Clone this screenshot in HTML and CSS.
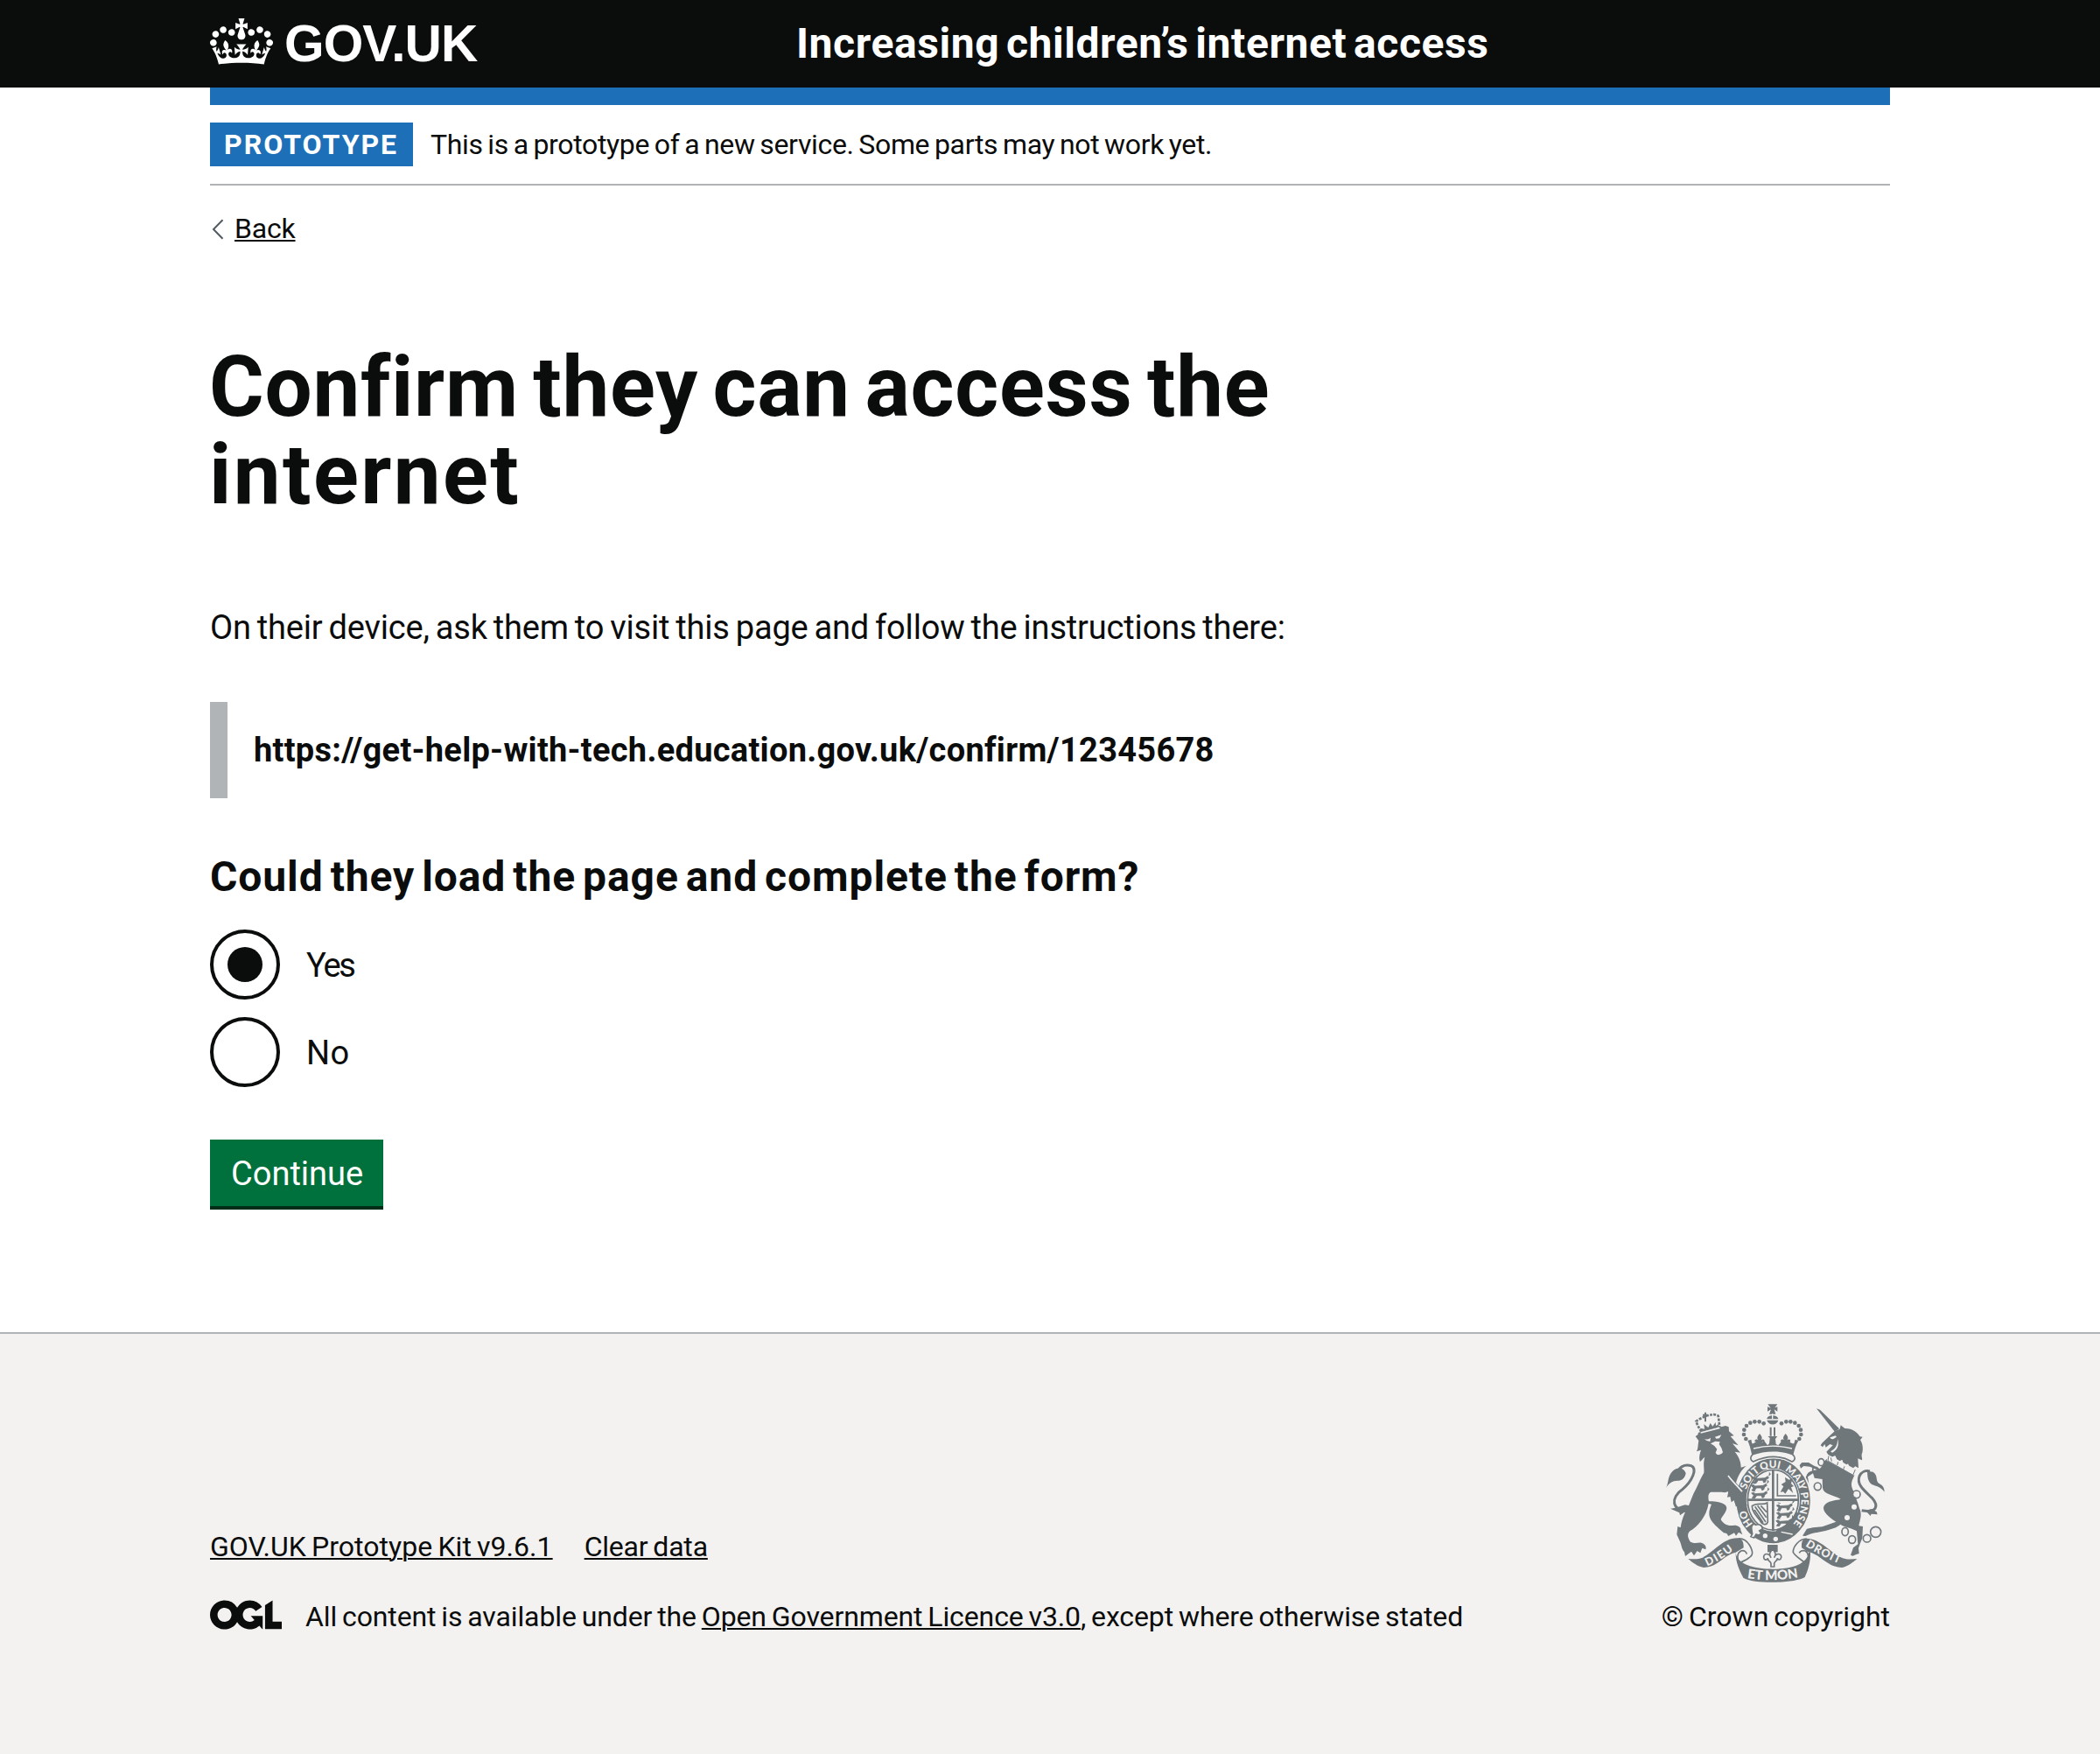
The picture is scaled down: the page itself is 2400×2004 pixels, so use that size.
FILE: index.html
```html
<!DOCTYPE html>
<html lang="en">
<head>
<meta charset="utf-8">
<title>Confirm they can access the internet</title>
<link rel="stylesheet" href="styles.css">
</head>
<body>
<header class="header">
  <div class="container header-row">
    <svg class="logo" viewBox="0 0 340 70" role="img" aria-label="GOV.UK">
      <svg x="0" y="1" width="72" height="53" viewBox="0 0 132 97"><path fill="#fff" fill-rule="evenodd" d="M25 30.2c3.5 1.5 7.7-.2 9.1-3.7 1.5-3.6-.2-7.8-3.9-9.2-3.6-1.4-7.6.3-9.1 3.9-1.4 3.5.3 7.5 3.9 9zM9 39.5c3.6 1.5 7.8-.2 9.2-3.7 1.5-3.6-.2-7.8-3.9-9.1-3.6-1.5-7.6.2-9.1 3.8-1.4 3.5.3 7.5 3.8 9zM4.4 57.2c3.5 1.5 7.7-.2 9.1-3.8 1.5-3.6-.2-7.7-3.9-9.1-3.5-1.5-7.6.3-9.1 3.8-1.4 3.5.3 7.6 3.9 9.1zm38.3-21.4c3.5 1.5 7.7-.2 9.1-3.8 1.5-3.6-.2-7.7-3.9-9.1-3.6-1.5-7.6.3-9.1 3.8-1.3 3.6.4 7.7 3.9 9.1zm64.4-5.6c-3.6 1.5-7.8-.2-9.1-3.7-1.5-3.6.2-7.8 3.8-9.2 3.6-1.4 7.7.3 9.2 3.9 1.3 3.5-.4 7.5-3.9 9zm15.9 9.3c-3.6 1.5-7.7-.2-9.1-3.7-1.5-3.6.2-7.8 3.7-9.1 3.6-1.5 7.7.2 9.2 3.8 1.5 3.5-.3 7.5-3.8 9zm4.7 17.7c-3.6 1.5-7.8-.2-9.2-3.8-1.5-3.6.2-7.7 3.9-9.1 3.6-1.5 7.7.3 9.2 3.8 1.3 3.5-.4 7.6-3.9 9.1zM89.3 35.8c-3.6 1.5-7.8-.2-9.2-3.8-1.4-3.6.2-7.7 3.9-9.1 3.6-1.5 7.7.3 9.2 3.8 1.4 3.6-.3 7.7-3.9 9.1zM69.7 17.7l8.9 4.7V9.3l-8.9 2.8c-.2-.3-.5-.6-.9-.9L72.4 0H59.6l3.5 11.2c-.3.3-.6.5-.9.9l-8.8-2.8v13.1l8.8-4.7c.3.3.6.7.9.9l-5 15.4v.1c-.2.8-.4 1.6-.4 2.4 0 4.1 3.1 7.5 7 8.1h.2c.3 0 .7.1 1 .1.4 0 .7 0 1-.1h.2c4-.6 7.1-4.1 7.1-8.1 0-.8-.1-1.7-.4-2.4V34l-5.1-15.4c.4-.2.7-.6 1-.9zM66 92.8c16.9 0 32.8 1.1 47.1 3.2 4-16.9 8.9-26.7 14-33.5l-9.6-3.4c1 4.9 1.1 7.2 0 10.2-1.5-1.4-3-4.3-4.2-8.7L108.6 76c2.8-2 5-3.2 7.5-3.3-4.4 9.4-10 11.9-13.6 11.2-4.3-.8-6.3-4.6-5.6-7.9 1-4.7 5.7-5.9 8-.5 4.3-8.7-3-11.4-7.6-8.8 7.1-7.2 7.9-13.5 2.1-21.1-8 6.1-8.1 12.3-4.5 20.8-4.7-5.4-12.1-2.5-9.5 6.2 3.4-5.2 7.9-2 7.2 3.1-.6 4.3-6.4 7.8-13.5 7.2-10.3-.9-10.9-8-11.2-13.8 2.5-.5 7.1 1.8 11 7.3L80.2 60c-4.1 4.4-8 5.3-12.3 5.4 1.4-4.4 8-11.6 8-11.6H55.5s6.4 7.2 7.9 11.6c-4.2-.1-8-1-12.3-5.4l1.4 16.4c3.9-5.5 8.5-7.7 10.9-7.3-.3 5.8-.9 12.8-11.1 13.8-7.2.6-12.9-2.9-13.5-7.2-.7-5 3.8-8.3 7.1-3.1 2.7-8.7-4.6-11.6-9.4-6.2 3.7-8.5 3.6-14.7-4.6-20.8-5.8 7.6-5 13.9 2.2 21.1-4.7-2.6-11.9.1-7.7 8.8 2.3-5.5 7.1-4.2 8.1.5.7 3.3-1.3 7.1-5.7 7.9-3.5.7-9-1.8-13.5-11.2 2.5.1 4.7 1.3 7.5 3.3l-4.7-15.4c-1.2 4.4-2.7 7.2-4.3 8.7-1.1-3-.9-5.3 0-10.2l-9.5 3.4c5 6.9 9.9 16.7 14 33.5 14.8-2.1 30.8-3.2 47.7-3.2z"/></svg>
      <text class="logo-text" x="85" y="50">GOV.UK</text>
    </svg>
    <span class="service-name">Increasing children’s internet access</span>
  </div>
</header>
<div class="container page">
  <div class="header-bar"></div>
  <div class="phase-banner">
    <strong class="tag">PROTOTYPE</strong>
    <span class="phase-text">This is a prototype of a new service. Some parts may not work yet.</span>
  </div>
  <div class="back">
    <svg class="chevron" viewBox="0 0 16 24"><path d="M14.5 1.2 4 12l10.5 10.8" fill="none" stroke="#505a5f" stroke-width="2"/></svg>
    <a class="link back-link" href="#">Back</a>
  </div>
  <main class="main">
    <h1 class="title">Confirm they can access the <span class="title-end">internet</span></h1>
    <p class="lead">On their device, ask them to visit this page and follow the instructions there:</p>
    <div class="inset">https://get-help-with-tech.education.gov.uk/confirm/12345678</div>
    <h2 class="question">Could they load the page and complete the form?</h2>
    <div class="radios">
      <label class="radio"><span class="dot dot-on"></span><span class="yes">Yes</span></label>
      <label class="radio"><span class="dot"></span><span class="no">No</span></label>
    </div>
    <button class="button" type="button">Continue</button>
  </main>
</div>
<footer class="footer">
  <div class="container footer-row">
    <div class="footer-main">
      <div class="footer-links"><a class="link kit" href="#">GOV.UK Prototype Kit v9.6.1</a><a class="link clear" href="#">Clear data</a></div>
      <div class="licence">
        <svg class="ogl" viewBox="0 0 483.2 195.7"><path fill="#0b0c0c" d="M421.5 142.8V.1l-50.7 32.3v161.1h112.4v-50.7zm-122.3-9.6A47.12 47.12 0 0 1 221 97.8c0-26 21.1-47.1 47.1-47.1 16.7 0 31.4 8.7 39.7 21.8l42.7-27.2A97.63 97.63 0 0 0 268.1 0c-36.5 0-68.3 20.1-85.1 49.7A98 98 0 0 0 97.8 0C43.9 0 0 43.9 0 97.8s43.9 97.8 97.8 97.8c36.5 0 68.3-20.1 85.1-49.7a97.76 97.76 0 0 0 149.6 25.4l19.4 22.2h3v-87.8h-80l24.3 27.5zM97.8 145c-26 0-47.1-21.1-47.1-47.1s21.1-47.1 47.1-47.1 47.1 21.1 47.1 47.1S123.8 145 97.8 145"/></svg>
        <span class="licence-text">All content is available under the <a class="link ogl-link" href="#">Open Government Licence v3.0</a>, except where otherwise stated</span>
      </div>
    </div>
    <div class="copyright">
      <svg class="crest" viewBox="42 42 750 612" role="img" aria-label="Royal coat of arms">
        <defs>
          <path id="garter" d="M409 487A97 113 0 0 1 409 261A97 113 0 0 1 409 487"/>
          <path id="bandL" d="M183 598Q230 580 290 530"/>
          <path id="bandR" d="M519 529Q580 568 656 598"/>
          <path id="bandC" d="M320 639Q410 654 506 634"/>
          <g id="leopard" class="leopard"><path d="M0 3l8-3 5 5 28-2 10-6 3 6-8 5-3 9-6 2-3-8H18l-7 10-9-1 6-9zM4-6l10 2M54-4l6-6-4-6"/></g>
          <g id="fleur"><path d="M0-20C11-8 9-2 3 5C9-4 19-1 16 9C12 4 8 8 6 18H-6C-8 8-12 4-16 9C-19-1-9-4-3 5C-9-2-11-8 0-20z"/></g>
        </defs>
        <!-- lion -->
        <g class="ink">
          <path d="M143 153L151 148L153 140L246 117L257 121L258 136L275 151L263 153L290 184L270 178L297 209L278 206C293 225 299 241 299 260L318 254C302 266 289 286 282 312C300 338 318 350 316 378L318 392L310 402L306 385L300 400L290 387L282 393L276 372L266 379L262 360L252 362L256 342L244 346L232 344L196 344C188 348 185 356 189 376C215 376 248 380 250 398C250 412 233 428 230 438C240 455 254 462 276 458C290 458 300 466 298 475L304 490L291 482L282 494L276 484L256 495L250 486L240 484L224 470C208 455 191 440 190 420C189 405 195 395 198 386L188 384C180 430 150 463 124 478C112 490 118 504 126 515C140 522 150 517 163 518C174 521 182 530 178 541L166 536L160 553L149 546L138 562L129 548L108 564L105 550C96 540 96 530 91 516L79 490L82 462L92 466C97 430 112 405 120 390L136 350C150 325 162 293 172 278C174 260 168 249 175 224C165 232 162 240 158 239C154 225 158 212 162 200L147 205C153 195 151 181 154 168z"/>
          <path d="M126 410C54 410 61 360 96 337C134 306 150 263 128 254C108 248 92 257 82 271" class="tail"/>
          <path d="M42 329C53 310 45 293 65 272C83 256 104 262 110 280C106 303 91 306 75 306C58 308 51 318 42 329zM57 401C73 401 92 392 108 388L129 392L119 412L105 413L90 424L88 415z"/>
          <path d="M163 137C155 124 149 113 145 102C154 94 170 88 177 84C197 78 213 76 221 83C224 97 224 109 226 121z" class="tiny"/>
          <path d="M164 137L160 125L174 128L172 112L187 123L194 108L202 119L212 105L213 117L222 112L224 121z"/>
          <path d="M168 80h18M177 71v32" class="tiny heavy"/>
        </g>
        <g class="paper"><path d="M164 158C175 166 187 165 195 158L193 171L182 168zM210 155L232 148L225 160L214 161zM195 178L211 170L227 172L224 180L232 193L237 208C230 218 217 220 212 209L217 197L208 186z"/></g>
        <path class="gap" d="M161 141L226 124"/>
        <!-- unicorn -->
        <g class="ink">
          <path d="M558 58L570 62L636 127L621 138z"/>
          <path d="M572 184L577 176L602 152L620 136L638 128L641 115L655 126C680 125 699 140 707 154L716 155L708 166C717 178 718 198 715 209C709 220 718 231 713 235L700 229L702 262L691 256L684 262L598 216L592 206L605 193L614 184L604 180L590 191L586 180L579 190z"/>
          <path d="M586 237L597 229L681 278L688 286C683 300 674 312 680 330C690 356 700 380 705 400C716 420 706 443 703 460L717 462L715 502L708 520L702 536L704 555L694 558L682 563L675 560L684 535L700 523L696 478C680 467 655 466 640 455C618 476 560 480 536 488L520 495L510 494L525 470L546 466L578 463L625 446C600 431 577 410 583 393C594 371 627 374 641 368C615 354 582 352 579 330L578 300L551 296L546 280L528 292L533 325L522 318L512 322L517 303L526 283C533 273 547 269 560 268L535 257L514 255L504 263L500 252L508 243L531 243L556 258L569 264C579 257 580 248 586 237z"/>
          <path d="M713 407C766 417 772 391 748 364C720 337 695 318 705 290C711 276 725 269 741 273" class="tail"/>
          <path d="M732 272L752 275C771 288 758 306 774 316C785 321 791 330 791 344C777 325 763 325 748 318C733 307 733 291 732 272zM726 408L743 426L746 419L767 421L764 412L747 402z"/>
          <g class="chain"><ellipse cx="574" cy="242" rx="10" ry="12"/><ellipse cx="554" cy="267" rx="9" ry="8"/><ellipse cx="562" cy="325" rx="12" ry="13"/><circle cx="695" cy="352" r="13"/><ellipse cx="656" cy="480" rx="11" ry="14"/><ellipse cx="680" cy="507" rx="12" ry="13"/><circle cx="731" cy="503" r="13"/><circle cx="761" cy="481" r="18"/></g>
        </g>
        <path class="gap" d="M593 221L687 274"/>
        <path class="paper" d="M599 215L607 226L622 219L632 241L646 233L654 256L666 247L675 268L692 262L686 287L593 236z"/>
        <path class="collar" d="M600 220L597 237L683 286L691 267M607 226L610 239M632 241L629 252M654 256L650 267"/>
        <path class="paper" d="M604 157L623 151L627 155L615 163L608 162zM606 205C624 196 631 181 630 162C637 183 629 201 612 209z"/>
        <g class="paper"><circle cx="687" cy="395" r="9"/><circle cx="663" cy="432" r="9"/><circle cx="695" cy="352" r="10"/></g>
        <!-- garter and shield -->
        <ellipse class="ink rim" cx="410" cy="374" rx="129" ry="148"/>
        <ellipse class="paper" cx="409" cy="371" rx="92" ry="108"/>
        <ellipse class="outline" cx="409" cy="371" rx="87" ry="103"/>
        <g class="ink shield">
          <path d="M405 267h8v211h-8zM320 367h176v8H320z"/>
          <use href="#leopard" x="340" y="293"/><use href="#leopard" x="334" y="319"/><use href="#leopard" x="335" y="345"/>
          <use href="#leopard" x="421" y="387"/><use href="#leopard" x="421" y="413"/><use href="#leopard" x="419" y="440"/>
          <path d="M424 281V357H488" class="line"/>
          <path d="M434 344L445 325L437 318L452 309L450 293L464 302L476 296L471 315L480 324L471 328L478 348L462 333L451 350L444 343z"/>
          <path d="M421 471C450 463 475 440 487 410L497 420C483 454 455 480 421 482z"/>
        </g>
        <path class="harp" d="M337 392C354 378 374 391 389 381L391 446C386 462 369 454 364 441C346 419 337 407 337 392zM347 394L384 447M356 391L386 431M367 391L387 413M345 405L375 449"/>
        <text class="motto"><textPath href="#garter" startOffset="78">HO</textPath></text>
        <text class="motto"><textPath href="#garter" startOffset="203">SOIT</textPath></text>
        <text class="motto"><textPath href="#garter" startOffset="288">QUI</textPath></text>
        <text class="motto"><textPath href="#garter" startOffset="371">MAL</textPath></text>
        <text class="motto"><textPath href="#garter" startOffset="437">Y</textPath></text>
        <text class="motto pense"><textPath href="#garter" startOffset="466">PENSE</textPath></text>
        <path class="buckle" d="M336 475C331 460 341 450 350 457C358 453 372 456 373 470L362 477L369 486L360 492L351 489L344 501L333 497L338 488z"/>
        <g class="paper"><circle cx="382" cy="494" r="8"/><circle cx="418" cy="505" r="8"/></g>
        <path class="gap thin" d="M437 481L476 489"/>
        <!-- lion's forepaw, laid over the garter -->
        <path class="paw" d="M254 288C272 304 292 320 303 338C314 352 318 364 316 378L320 390L311 403L306 387L300 402L290 388L282 395L275 372L256 350z"/>
        <path class="gap" d="M255 288C272 311 290 326 303 343"/>
        <!-- crown -->
        <path class="paper" d="M331 218H485V250Q410 207 331 250z"/>
        <path class="outline" d="M339 216C329 223 331 236 341 240C388 218 434 218 474 240C486 235 487 223 476 216"/>
        <g class="ink">
          <path d="M322 168L334 164L337 178C346 179 353 169 354 169L364 182L378 168L390 184L396 178L398 159L391 153H424L417 162L419 180L427 184L440 168L454 182L464 169C467 176 475 179 481 178L485 164L496 168C486 185 482 202 478 218C430 200 384 202 337 218C332 195 328 180 322 168z"/>
          <use href="#fleur" x="363" y="164"/><use href="#fleur" x="452" y="164"/>
          <path d="M391 43H424L415 55L424 52V68L413 61L418 77H396L402 61L390 68V52L401 56z"/>
          <path d="M388 94C389 78 425 78 427 94zM388 98H427C423 117 393 117 388 98z"/>
          <path d="M398 122h6v30h-6zM411 122h6v30h-6z"/>
          <g><circle cx="316" cy="162" r="7"/><circle cx="309" cy="147" r="7"/><circle cx="310" cy="131" r="7"/><circle cx="318" cy="117" r="7"/><circle cx="331" cy="107" r="7"/><circle cx="346" cy="103" r="7"/><circle cx="362" cy="103" r="7"/><circle cx="377" cy="109" r="7"/><circle cx="499" cy="162" r="7"/><circle cx="505" cy="147" r="7"/><circle cx="504" cy="131" r="7"/><circle cx="497" cy="117" r="7"/><circle cx="484" cy="107" r="7"/><circle cx="469" cy="103" r="7"/><circle cx="454" cy="103" r="7"/><circle cx="438" cy="109" r="7"/></g>
        </g>
        <path class="gap thin" d="M407 76v18M342 195Q408 178 474 195"/>
        <!-- motto ribbons -->
        <g class="ink">
          <path d="M118 573C134 574 151 576 167 569C205 551 238 501 287 502C301 503 309 512 308 535L281 551C241 558 221 602 171 603C150 599 133 586 118 573z"/>
          <path d="M697 573C683 574 665 577 648 571C607 553 571 503 523 503C510 505 506 513 507 535L529 550C570 555 593 602 645 603C665 599 681 587 697 573z"/>
          <path d="M281 551C285 592 343 608 410 608C476 608 526 590 532 550L537 552C538 590 525 620 518 636C480 658 343 660 307 638C299 621 280 590 281 551z"/>
          <path d="M390 525h35v25h-35z"/>
        </g>
        <path class="outline" d="M290 504C324 501 344 548 336 560C325 576 303 582 294 587C284 571 286 553 299 546C310 542 318 549 319 557M524 504C496 504 477 535 478 551C487 567 513 580 521 589C534 573 532 554 520 546C509 542 501 548 499 553"/>
        <path class="lily" d="M407 540C420 553 419 559 413 569C418 552 439 553 437 568C435 578 426 578 424 571C423 583 414 580 413 589V600H402V589C400 580 392 583 391 571C388 579 378 578 377 568C376 553 396 552 402 569C395 559 396 553 407 540z"/>
        <text class="ribbon"><textPath href="#bandL">DIEU</textPath></text>
        <text class="ribbon droit"><textPath href="#bandR">DROIT</textPath></text>
        <text class="ribbon big"><textPath href="#bandC">ET MON</textPath></text>
      </svg>
      <span class="crown-text">© Crown copyright</span>
    </div>
  </div>
</footer>
</body>
</html>
```
FILE: styles.css
```css
* { box-sizing: border-box; }
body {
  margin: 0;
  min-height: 2004px;
  display: flex;
  flex-direction: column;
  background: #fff;
  color: #0b0c0c;
  font: 400 38px/50px Roboto, "Noto Sans", sans-serif;
}
.container { width: 1920px; margin: 0 auto; }
.header { background: #0b0c0c; height: 100px; }
.header-row { display: flex; padding-top: 20px; }
.logo { width: 340px; height: 70px; margin-right: 330px; }
.logo-text { fill: #fff; font: 700 58.6px "Liberation Sans", sans-serif; letter-spacing: -.9px; }
.service-name {
  color: #fff;
  font-size: 48px;
  font-weight: 700;
  line-height: 60px;
  letter-spacing: .58px;
  word-spacing: -4.8px;
  white-space: nowrap;
}
.header-bar { height: 20px; background: #1d70b8; }
.phase-banner {
  display: flex;
  gap: 20px;
  padding: 20px 0;
  border-bottom: 2px solid #b1b4b6;
  font-size: 32px;
}
.tag { width: 232px; padding-left: 16px; background: #1d70b8; color: #fff; letter-spacing: 2px; }
.phase-text { letter-spacing: -.34px; word-spacing: -1.9px; white-space: nowrap; }
.back { display: flex; align-items: center; gap: 12px; margin-top: 29px; height: 40px; font-size: 32px; line-height: 40px; }
.chevron { width: 16px; height: 24px; margin-top: 2px; }
.link { color: #0b0c0c; text-decoration: underline; text-decoration-thickness: 2px; text-underline-offset: 2px; }
.back-link { letter-spacing: -.2px; }
.title {
  width: 1280px;
  margin: 111px 0 100px -1px;
  font-size: 96px;
  font-weight: 700;
  line-height: 100px;
  letter-spacing: .7px;
  word-spacing: -8px;
}
.title-end { letter-spacing: 2.4px; }
.lead { margin: 0 0 60px; letter-spacing: -.17px; word-spacing: -2.3px; white-space: nowrap; }
.inset { padding: 30px; border-left: 20px solid #b1b4b6; font-weight: 700; letter-spacing: .28px; }
.question { margin: 60px 0 30px; font-size: 48px; font-weight: 700; line-height: 60px; letter-spacing: .9px; word-spacing: -4.8px; }
.radios { display: flex; flex-direction: column; gap: 20px; }
.radio { display: flex; gap: 30px; height: 80px; line-height: 82px; }
.dot { display: flex; align-items: center; justify-content: center; width: 80px; height: 80px; border: 4px solid #0b0c0c; border-radius: 50%; }
.dot-on::after { content: ""; width: 40px; height: 40px; border-radius: 50%; background: #0b0c0c; }
.yes { letter-spacing: -2.2px; }
.no { letter-spacing: .4px; }
.button {
  display: block;
  width: 198px;
  height: 76px;
  margin: 60px 0 144px;
  padding: 2px 0 0 24px;
  border: 0;
  background: #00703c;
  box-shadow: 0 4px 0 #002d18;
  color: #fff;
  font: inherit;
  text-align: left;
}
.footer { flex: 1; padding-top: 80px; background: #f3f2f1; border-top: 2px solid #b1b4b6; font-size: 32px; line-height: 40px; }
.footer-row { display: flex; justify-content: space-between; align-items: flex-end; }
.footer-main { display: flex; flex-direction: column; gap: 40px; }
.footer-links { display: flex; gap: 36px; }
.kit { letter-spacing: .05px; word-spacing: -1.9px; }
.clear { letter-spacing: -.2px; word-spacing: -1.9px; }
.licence { display: flex; gap: 27px; white-space: nowrap; }
.ogl { width: 82px; height: 34px; margin-top: 1px; }
.licence-text { letter-spacing: -.12px; word-spacing: -1.9px; }
.copyright { display: flex; flex-direction: column; align-items: flex-end; gap: 19px; }
.crown-text { word-spacing: -1.9px; white-space: nowrap; }
.crest { width: 250px; height: 204px; margin-right: 6px; }
.ink { fill: #6f777b; }
.paper { fill: #f3f2f1; }
.tail { fill: none; stroke: #6f777b; stroke-width: 9; }
.tiny { fill: none; stroke: #6f777b; stroke-width: 8; stroke-dasharray: 9 4; }
.heavy { stroke-width: 6; stroke-dasharray: none; }
.collar { fill: none; stroke: #6f777b; stroke-width: 3; }
.gap { fill: none; stroke: #f3f2f1; stroke-width: 5; }
.thin { stroke-width: 4; }
.chain { fill: none; stroke: #6f777b; stroke-width: 5; }
.rim { stroke: #f3f2f1; stroke-width: 5; }
.outline { fill: none; stroke: #6f777b; stroke-width: 5; }
.leopard { stroke: #6f777b; stroke-width: 2.5; }
.shield .line { fill: none; stroke: #6f777b; stroke-width: 5; }
.harp { fill: none; stroke: #6f777b; stroke-width: 5; }
.paw { fill: #6f777b; }
.motto { fill: #f3f2f1; font: 900 35px Lato, sans-serif; }
.pense { letter-spacing: 1.5px; }
.buckle { fill: #f3f2f1; stroke: #6f777b; stroke-width: 5; }
.lily { fill: #f3f2f1; stroke: #6f777b; stroke-width: 5; }
.ribbon { fill: #f3f2f1; font: 900 38px Lato, sans-serif; letter-spacing: 5px; }
.droit { letter-spacing: 3px; }
.big { font-size: 45px; letter-spacing: 0; }
```
